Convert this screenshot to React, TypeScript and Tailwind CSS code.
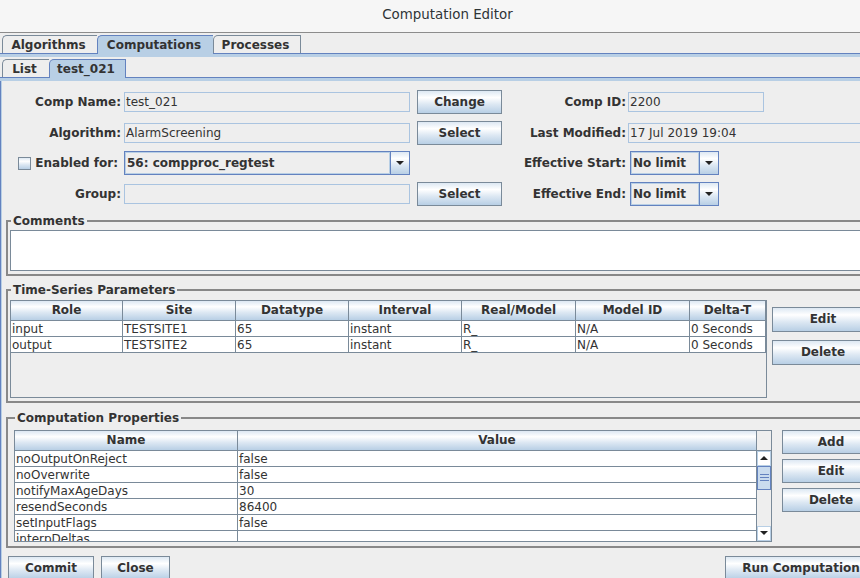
import React from "react";

// Metal "Ocean" colours
const grad = "bg-[linear-gradient(#dde8f3_0%,#ffffff_30%,#dde8f3_60%,#b8cfe5_100%)]";

const Arrow = ({ up = false }: { up?: boolean }) => (
  <svg width="8" height="4" viewBox="0 0 8 4">
    <path d={up ? "M0 4H8L4 0Z" : "M0 0H8L4 4Z"} fill="#222" />
  </svg>
);

function Btn({ label, className = "" }: { label: string; className?: string }) {
  return (
    <button
      className={`flex shrink-0 items-center justify-center border border-[#7a8a99] ${grad} text-[12px] font-bold text-[#333333] ${className}`}
    >
      {label}
    </button>
  );
}

function Field({ value = "", className = "" }: { value?: string; className?: string }) {
  return (
    <div
      className={`h-[20px] shrink-0 overflow-hidden whitespace-nowrap border border-[#aac4e0] bg-[#eeeeee] px-[1px] leading-[18px] ${className}`}
    >
      {value}
    </div>
  );
}

function Combo({ value, className = "" }: { value: string; className?: string }) {
  return (
    <div className={`flex h-[24px] shrink-0 border border-[#6382bf] ${className}`}>
      <div className="flex flex-1 items-center border border-[#b8cfe5] bg-[#eeeeee] pl-[1px] font-bold">
        {value}
      </div>
      <div className={`flex w-[19px] items-center justify-center border-l border-[#6382bf] ${grad}`}>
        <Arrow />
      </div>
    </div>
  );
}

function Tab({ label, w, active, last }: { label: string; w: string; active?: boolean; last?: boolean }) {
  return (
    <div
      className={`flex items-center justify-center rounded-tl-[5px] border-t border-l pr-[3px] font-bold ${w} ${
        active ? "-mb-px h-[19px] border-[#6382bf] bg-[#b8cfe5]" : "h-[18px] border-[#7a8a99] bg-[#eeeeee]"
      } ${last ? "border-r" : ""}`}
    >
      {label}
    </div>
  );
}

const Label = ({ text, w }: { text: string; w: string }) => (
  <div className={`shrink-0 text-right font-bold ${w}`}>{text}</div>
);

const tsCols = "grid grid-cols-[112px_113px_113px_113px_114px_114px_76px]";
const tsHead = ["Role", "Site", "Datatype", "Interval", "Real/Model", "Model ID", "Delta-T"];
const tsRows = [
  ["input", "TESTSITE1", "65", "instant", "R_", "N/A", "0 Seconds"],
  ["output", "TESTSITE2", "65", "instant", "R_", "N/A", "0 Seconds"],
];

const props = [
  ["noOutputOnReject", "false"],
  ["noOverwrite", "false"],
  ["notifyMaxAgeDays", "30"],
  ["resendSeconds", "86400"],
  ["setInputFlags", "false"],
  ["interpDeltas", ""],
];

function Legend({ text }: { text: string }) {
  return <legend className="ml-[1px] px-[2px] font-bold leading-[14px]">{text}</legend>;
}

export default function App() {
  return (
    <div className="h-[578px] w-[860px] overflow-hidden bg-[#eeeeee] font-['DejaVu_Sans',sans-serif] text-[12px] text-[#333333]">
      <div className="w-[895px]">
        {/* window title */}
        <div className="flex h-[33px] items-center justify-center border-b border-[#8c8c8c] bg-[#f6f6f6] pb-[2px] text-[13.4px] text-[#2e3436]">
          Computation Editor
        </div>

        {/* outer tabs */}
        <div className="flex h-[21px] items-end border-b border-[#6382bf] pl-[2px]">
          <Tab label="Algorithms" w="w-[95px]" />
          <Tab label="Computations" w="w-[116px]" active />
          <Tab label="Processes" w="w-[88px]" last />
        </div>
        <div className="h-[3px] bg-[#b8cfe5]" />

        {/* inner tabs */}
        <div className="flex h-[21px] items-end border-b border-[#6382bf] pl-[2px]">
          <Tab label="List" w="w-[47px]" />
          <Tab label="test_021" w="w-[77px]" active last />
        </div>
        <div className="h-[3px] bg-[#b8cfe5]" />

        <div className="border-l border-[#6382bf]">
          <div className="h-[500px] border-l border-[#b8cfe5]">
            {/* header form */}
            <div className="pt-[5.5px]">
              <div className="flex h-[30.7px] items-center">
                <Label text="Comp Name:" w="w-[119px]" />
                <Field value="test_021" className="ml-[3px] w-[286px]" />
                <Btn label="Change" className="ml-[7px] h-[24px] w-[85px]" />
                <Label text="Comp ID:" w="w-[124px]" />
                <Field value="2200" className="ml-[2px] w-[136px]" />
              </div>
              <div className="flex h-[30.7px] items-center">
                <Label text="Algorithm:" w="w-[119px]" />
                <Field value="AlarmScreening" className="ml-[3px] w-[286px]" />
                <Btn label="Select" className="ml-[7px] h-[24px] w-[85px]" />
                <Label text="Last Modified:" w="w-[124px]" />
                <Field value="17 Jul 2019 19:04" className="ml-[2px] w-[260px]" />
              </div>
              <div className="flex h-[30.7px] items-center">
                <div className="flex w-[119px] shrink-0 items-center justify-end pr-[3px]">
                  <div className={`h-[13px] w-[13px] border border-[#7a8a99] ${grad}`} />
                  <span className="ml-[4px] font-bold">Enabled for:</span>
                </div>
                <Combo value="56: compproc_regtest" className="ml-[3px] w-[286px]" />
                <div className="w-[92px] shrink-0" />
                <Label text="Effective Start:" w="w-[124px]" />
                <Combo value="No limit" className="ml-[4px] w-[89px]" />
              </div>
              <div className="flex h-[30.7px] items-center">
                <Label text="Group:" w="w-[119px]" />
                <Field className="ml-[3px] w-[286px]" />
                <Btn label="Select" className="ml-[7px] h-[24px] w-[85px]" />
                <Label text="Effective End:" w="w-[124px]" />
                <Combo value="No limit" className="ml-[4px] w-[89px]" />
              </div>
            </div>

            {/* comments */}
            <fieldset className="mx-[4px] mt-[4.7px] border-2 border-[#888888] px-[2px] pt-[2px] pb-[3px]">
              <Legend text="Comments" />
              <div className="h-[41px] border border-[#7a8a99] bg-white" />
            </fieldset>

            {/* time series parameters */}
            <fieldset className="mx-[4px] mt-[7px] border-2 border-[#888888] px-[2px] pt-[3px] pb-[3px]">
              <Legend text="Time-Series Parameters" />
              <div className="flex">
                <div className="h-[98px] w-[757px] shrink-0 border border-[#7a8a99]">
                  <div className={tsCols}>
                    {tsHead.map((h) => (
                      <div
                        key={h}
                        className={`flex h-[20px] items-center justify-center border-r border-b border-[#7a8a99] ${grad} font-bold`}
                      >
                        {h}
                      </div>
                    ))}
                  </div>
                  {tsRows.map((r, i) => (
                    <div key={i} className={tsCols}>
                      {r.map((c, j) => (
                        <div
                          key={j}
                          className="h-[16px] overflow-hidden whitespace-nowrap border-r border-b border-[#7a8a99] bg-white pl-[1px] leading-[17px]"
                        >
                          {c}
                        </div>
                      ))}
                    </div>
                  ))}
                </div>
                <div className="ml-[5px] flex flex-col gap-[8px] pt-[7px]">
                  <Btn label="Edit" className="h-[25px] w-[102px]" />
                  <Btn label="Delete" className="h-[25px] w-[102px]" />
                </div>
              </div>
            </fieldset>

            {/* computation properties */}
            <fieldset className="mx-[4px] mt-[8px] border-2 border-[#888888] pr-[2px] pl-[6px] pt-[5px] pb-[4px]">
              <Legend text="Computation Properties" />
              <div className="flex">
                <div className="h-[112px] w-[758px] shrink-0 border border-[#7a8a99]">
                  <div className="grid grid-cols-[223px_519px_14px]">
                    <div className={`flex h-[20px] items-center justify-center border-r border-b border-[#7a8a99] ${grad} font-bold`}>
                      Name
                    </div>
                    <div className={`flex h-[20px] items-center justify-center border-r border-b border-[#7a8a99] ${grad} font-bold`}>
                      Value
                    </div>
                    <div className="h-[20px] border-b border-[#7a8a99] bg-[#eeeeee]" />
                  </div>
                  <div className="flex h-[90px]">
                    <div className="w-[742px] overflow-hidden">
                      {props.map(([n, v]) => (
                        <div key={n} className="grid grid-cols-[223px_519px]">
                          <div className="h-[16px] overflow-hidden whitespace-nowrap border-r border-b border-[#7a8a99] bg-white pl-[1px] leading-[17px]">
                            {n}
                          </div>
                          <div className="h-[16px] overflow-hidden whitespace-nowrap border-r border-b border-[#7a8a99] bg-white pl-[1px] leading-[17px]">
                            {v}
                          </div>
                        </div>
                      ))}
                    </div>
                    {/* scrollbar */}
                    <div className="flex w-[14px] flex-col bg-[#eeeeee]">
                      <div className="flex h-[15px] items-center justify-center border border-[#b8cfe5] bg-white">
                        <Arrow up />
                      </div>
                      <div className="flex h-[24px] flex-col items-center justify-center gap-[2px] border border-[#6382bf] bg-[#c9dbee]">
                        <div className="h-px w-[9px] bg-[#6382bf]" />
                        <div className="h-px w-[9px] bg-[#6382bf]" />
                        <div className="h-px w-[9px] bg-[#6382bf]" />
                      </div>
                      <div className="flex-1" />
                      <div className="flex h-[15px] items-center justify-center border border-[#b8cfe5] bg-white">
                        <Arrow />
                      </div>
                    </div>
                  </div>
                </div>
                <div className="ml-[10px] flex flex-col gap-[5px]">
                  <Btn label="Add" className="h-[24px] w-[98px]" />
                  <Btn label="Edit" className="h-[24px] w-[98px]" />
                  <Btn label="Delete" className="h-[24px] w-[98px]" />
                </div>
              </div>
            </fieldset>

            {/* bottom buttons */}
            <div className="mt-[8px] flex">
              <Btn label="Commit" className="ml-[6px] h-[24px] w-[86px]" />
              <Btn label="Close" className="ml-[7px] h-[24px] w-[69px]" />
              <Btn label="Run Computation" className="mr-[18px] ml-auto h-[24px] w-[152px]" />
            </div>
          </div>
        </div>
      </div>
    </div>
  );
}
